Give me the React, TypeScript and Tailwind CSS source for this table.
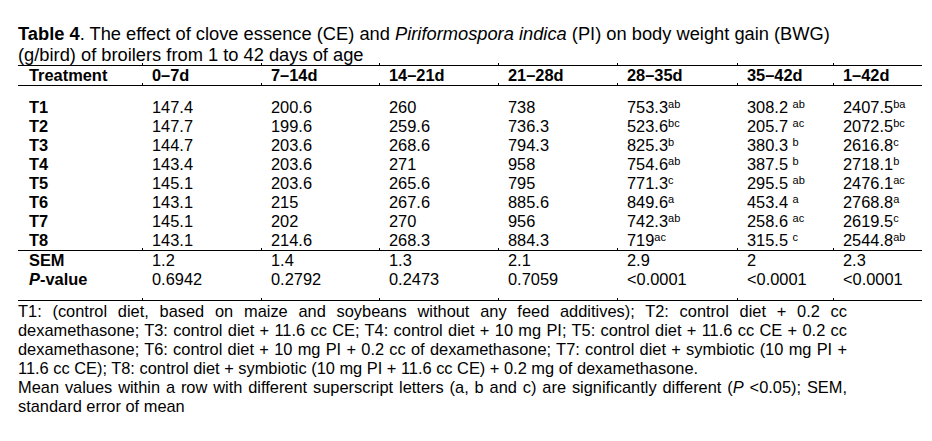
type Cell = string | [string, string];

const COLS = "grid grid-cols-[124px_119px_118px_119px_119px_120px_96px_89px]";

const HEADERS = ["Treatment", "0–7d", "7–14d", "14–21d", "21–28d", "28–35d", "35–42d", "1–42d"];

const ROWS: { name: string; cells: Cell[] }[] = [
  { name: "T1", cells: ["147.4", "200.6", "260", "738", ["753.3", "ab"], ["308.2 ", "ab"], ["2407.5", "ba"]] },
  { name: "T2", cells: ["147.7", "199.6", "259.6", "736.3", ["523.6", "bc"], ["205.7 ", "ac"], ["2072.5", "bc"]] },
  { name: "T3", cells: ["144.7", "203.6", "268.6", "794.3", ["825.3", "b"], ["380.3 ", "b"], ["2616.8", "c"]] },
  { name: "T4", cells: ["143.4", "203.6", "271", "958", ["754.6", "ab"], ["387.5 ", "b"], ["2718.1", "b"]] },
  { name: "T5", cells: ["145.1", "203.6", "265.6", "795", ["771.3", "c"], ["295.5 ", "ab"], ["2476.1", "ac"]] },
  { name: "T6", cells: ["143.1", "215", "267.6", "885.6", ["849.6", "a"], ["453.4 ", "a"], ["2768.8", "a"]] },
  { name: "T7", cells: ["145.1", "202", "270", "956", ["742.3", "ab"], ["258.6 ", "ac"], ["2619.5", "c"]] },
  { name: "T8", cells: ["143.1", "214.6", "268.3", "884.3", ["719", "ac"], ["315.5 ", "c"], ["2544.8", "ab"]] },
];

const SEM = ["1.2", "1.4", "1.3", "2.1", "2.9", "2", "2.3"];
const PVALUES = ["0.6942", "0.2792", "0.2473", "0.7059", "<0.0001", "<0.0001", "<0.0001"];

function Ticks() {
  return (
    <div className={`${COLS} h-[2px] -mt-[2px]`}>
      {HEADERS.map((h, i) => (
        <div key={h} className={i === 0 ? "" : "border-l border-black"} />
      ))}
    </div>
  );
}

function Rule() {
  return (
    <>
      <Ticks />
      <div className="h-px bg-black" />
    </>
  );
}

function Value({ cell }: { cell: Cell }) {
  if (typeof cell === "string") return <>{cell}</>;
  return (
    <>
      {cell[0]}
      <sup className="text-[11px]">{cell[1]}</sup>
    </>
  );
}

function Row({ label, cells }: { label: React.ReactNode; cells: Cell[] }) {
  return (
    <div className={`${COLS} h-[19px]`}>
      <div className="pl-[11px] font-bold whitespace-nowrap">{label}</div>
      {cells.map((c, i) => (
        <div key={i} className="pl-[10px] whitespace-nowrap">
          <Value cell={c} />
        </div>
      ))}
    </div>
  );
}

export default function App() {
  return (
    <div className="w-[932px] h-[441px] bg-white text-black pl-[18px] font-['Liberation_Sans',Arial,sans-serif]">
      <p className="w-[850px] pt-[23px] text-[18.3px] leading-[21px]">
        <b>Table 4</b>. The effect of clove essence (CE) and <i>Piriformospora indica</i> (PI) on body weight gain (BWG)
        (g/bird) of broilers from 1 to 42 days of age
      </p>

      <div className="w-[904px] text-[16.4px] leading-[19px]">
        <Rule />
        <div className={`${COLS} h-[19px] font-bold`}>
          {HEADERS.map((h, i) => (
            <div key={h} className={i === 0 ? "pl-[11px]" : "pl-[10px]"}>
              {h}
            </div>
          ))}
        </div>
        <Rule />

        <div className="pt-[12px]">
          {ROWS.map((r) => (
            <Row key={r.name} label={r.name} cells={r.cells} />
          ))}
        </div>
        <Rule />

        <Row label="SEM" cells={SEM} />
        <Row
          label={
            <>
              <i>P</i>-value
            </>
          }
          cells={PVALUES}
        />
        <div className="h-[11px]" />
        <Rule />
      </div>

      <div className="w-[829px] pt-px text-[16.4px] leading-[19px] text-justify">
        <p>
          T1: (control diet, based on maize and soybeans without any feed additives); T2: control diet + 0.2 cc
          dexamethasone; T3: control diet + 11.6 cc CE; T4: control diet + 10 mg PI; T5: control diet + 11.6 cc CE + 0.2
          cc dexamethasone; T6: control diet + 10 mg PI + 0.2 cc of dexamethasone; T7: control diet + symbiotic (10 mg PI
          + 11.6 cc CE); T8: control diet + symbiotic (10 mg PI + 11.6 cc CE) + 0.2 mg of dexamethasone.
        </p>
        <p>
          Mean values within a row with different superscript letters (a, b and c) are significantly different (
          <i>P</i> &lt;0.05); SEM, standard error of mean
        </p>
      </div>
    </div>
  );
}
